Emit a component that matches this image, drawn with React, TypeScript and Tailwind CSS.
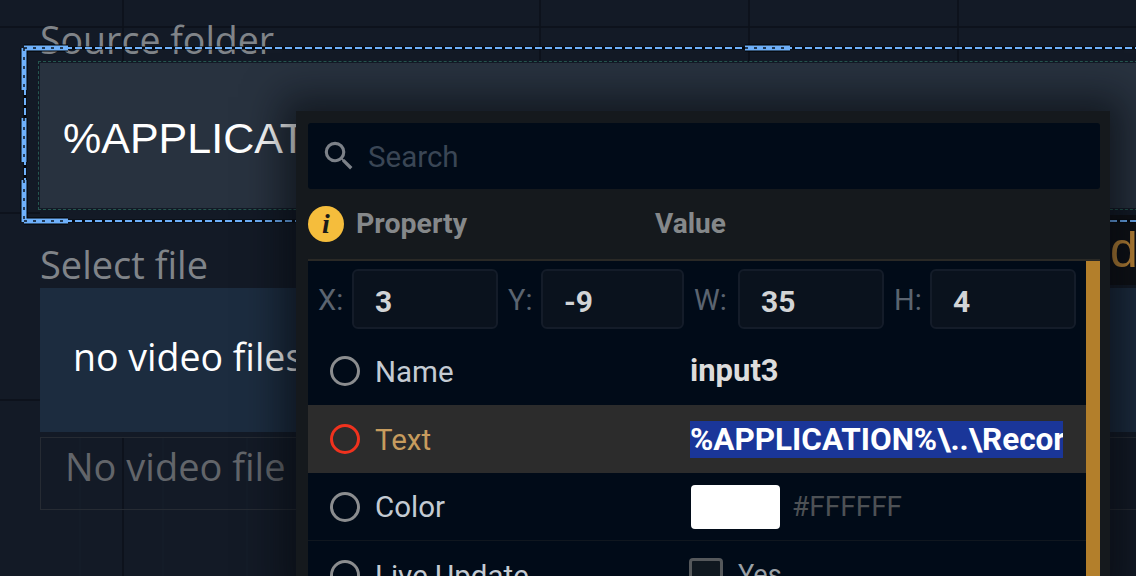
export default function App() {
  const handles = "#6fb1fb";
  const thick = "M24 48H68M24 48V90M24 118V162M24 180V222M24 221H68M745 48H790";
  return (
    <div className="relative w-[1136px] h-[576px] overflow-hidden bg-[#131a26] pl-[40px] font-['Open_Sans',sans-serif]">
      {/* faint canvas grid */}
      <svg className="absolute left-0 top-0 w-[1136px] h-[576px]" viewBox="0 0 1136 576" fill="none">
        <path d="M123 0V62M123 509V576M540 0V62M749 0V62M958 0V62M0 27H1136M0 213H40M0 400H40M123 437V510" stroke="#0c111a" strokeWidth="1.5" />
        <path d="M80 510V576M163 510V576M247 510V576M80 437V510M163 437V510M247 437V510" stroke="#171e2a" strokeWidth="1" />
      </svg>

      <div className="relative flex flex-col w-[1136px]">
        <div className="h-[63px] pt-[17px] text-[37.5px] leading-[46px] text-[#808489] whitespace-nowrap">Source folder</div>
        <div className="flex items-center h-[145px] pl-[23px] pt-[5px] bg-[#28323f] outline-1 outline-dashed outline-offset-1 outline-[#25564f] text-[43px] text-white font-['Liberation_Sans',sans-serif] whitespace-nowrap">
          <span className="w-[233px] overflow-hidden">%APPLICAT</span>
        </div>
        <div className="flex items-end h-[80px] relative">
          <div className="text-[38px] leading-[48px] text-[#808489] whitespace-nowrap">Select file</div>
        </div>
        <div className="flex items-center h-[144px] pl-[33px] pb-[6px] bg-[#1c2c3f] text-[37.5px] text-white whitespace-nowrap">
          <span className="w-[223px] overflow-hidden">no video files</span>
        </div>
        <div className="flex items-center h-[73px] mt-[5px] pl-[24px] pb-[14px] border border-[#262b33] text-[38px] text-[#62656a] whitespace-nowrap">No video file</div>
      </div>

      {/* button peeking out to the right of the panel */}
      <div className="absolute left-[1110px] top-[215px] w-[26px] h-[70px] overflow-hidden bg-[#0e1015] flex items-center text-[50px] leading-none text-[#c48a38] font-['Liberation_Sans',sans-serif]">d</div>

      {/* selection overlay */}
      <svg className="absolute left-0 top-0 w-[1136px] h-[576px]" viewBox="0 0 1136 576" fill="none">
        <path d="M25 48H1136M25 221H300M1110 221H1136M25 48V221" stroke="#05080e" strokeWidth="3" />
        <path d="M25 48H1136M25 221H300M1110 221H1136M25 48V221" stroke={handles} strokeWidth="2" strokeDasharray="7 3" />
        <path d={thick} stroke="#000" strokeWidth="7" />
        <path d={thick} stroke={handles} strokeWidth="5" />
        <path d={thick} stroke="#0b1422" strokeWidth="1.5" strokeDasharray="3 6" />
      </svg>

      {/* floating property panel */}
      <div className="absolute left-[296px] top-[111px] w-[814px] h-[480px] bg-[#15191d] shadow-[0_0_36px_14px_rgba(5,8,14,0.6)] pt-[12px] pl-[12px] pr-[10px] font-['Roboto',sans-serif]">
        <div className="flex items-center h-[66px] rounded-[3px] bg-[#010b18] pl-[12px] gap-[10px]">
          <svg className="w-[38px] h-[38px]" viewBox="0 0 24 24" fill="#7c8188">
            <path d="M15.5 14h-.79l-.28-.27A6.471 6.471 0 0 0 16 9.5 6.5 6.5 0 1 0 9.5 16c1.61 0 3.09-.59 4.23-1.57l.27.28v.79l5 4.99L20.49 19l-4.99-5zm-6 0C7.01 14 5 11.99 5 9.5S7.01 5 9.5 5 14 7.01 14 9.5 11.99 14 9.5 14z" />
          </svg>
          <span className="pt-[3px] text-[29.5px] text-[#3a4655]">Search</span>
        </div>

        <div className="flex items-center h-[72px] border-b-2 border-[#2a2926] text-[28.5px] font-bold text-[#85888a]">
          <span className="flex items-center justify-center w-[36px] h-[36px] rounded-full bg-[#f5bd3c] text-[#1a1a1a] font-['Liberation_Serif',serif] italic font-bold text-[28px] leading-none">i</span>
          <span className="ml-[12px] w-[299px]">Property</span>
          <span className="text-[28px]">Value</span>
        </div>

        <div className="flex h-[400px]">
          <div className="w-[778px] bg-[#010b18]">
            <div className="flex items-center h-[76px] pl-[10px] text-[29px] text-[#5b6470]">
              <span className="w-[34px] pt-[4px]">X:</span>
              <NumBox w="w-[146px]" v="3" />
              <span className="w-[33px] ml-[10px] pt-[4px]">Y:</span>
              <NumBox w="w-[143px]" v="-9" />
              <span className="w-[44px] ml-[10px] pt-[4px]">W:</span>
              <NumBox w="w-[146px]" v="35" />
              <span className="w-[36px] ml-[10px] pt-[4px]">H:</span>
              <NumBox w="w-[146px]" v="4" />
            </div>

            <Row label="Name">
              <span className="text-[31px] font-bold text-[#dcdcdc]">input3</span>
            </Row>
            <Row label="Text" active>
              <span className="w-[373px] h-[37px] overflow-hidden bg-[#1a3699] text-[31.5px] leading-[38px] font-bold text-white whitespace-nowrap">%APPLICATION%\..\Recor</span>
            </Row>
            <Row label="Color" line>
              <span className="w-[89px] h-[44px] ml-[1px] rounded-[4px] bg-white" />
              <span className="ml-[12px] text-[28px] text-[#4d5155]">#FFFFFF</span>
            </Row>
            <Row label="Live Update">
              <span className="w-[34px] h-[34px] -ml-[1px] rounded-[4px] border-[3px] border-[#55585b] bg-[#101820]" />
              <span className="ml-[15px] text-[27px] text-[#9aa0a6]">Yes</span>
            </Row>
          </div>
          <div className="w-[14px] bg-[#b37f2b]" />
        </div>
      </div>
    </div>
  );
}

function NumBox({ w, v }: { w: string; v: string }) {
  return (
    <div className={`${w} flex items-center h-[60px] pl-[21px] pt-[4px] rounded-[6px] border-2 border-[#141c29] bg-[#0a121d] text-[30px] font-bold text-[#d2d4d6]`}>
      {v}
    </div>
  );
}

function Row({ label, active, line, children }: { label: string; active?: boolean; line?: boolean; children: React.ReactNode }) {
  return (
    <div className={`flex items-center h-[68px] pl-[22px] ${active ? "bg-[#2c2c2c]" : ""} ${line ? "border-b border-[#10171f]" : ""}`}>
      <span className={`w-[30px] h-[30px] rounded-full border-[3px] ${active ? "border-[#f0321e]" : "border-[#8b8d8f]"}`} />
      <span className={`ml-[15px] w-[315px] pt-[2px] text-[29.5px] whitespace-nowrap ${active ? "text-[#c79c5e]" : "text-[#c4cbd3]"}`}>{label}</span>
      {children}
    </div>
  );
}
